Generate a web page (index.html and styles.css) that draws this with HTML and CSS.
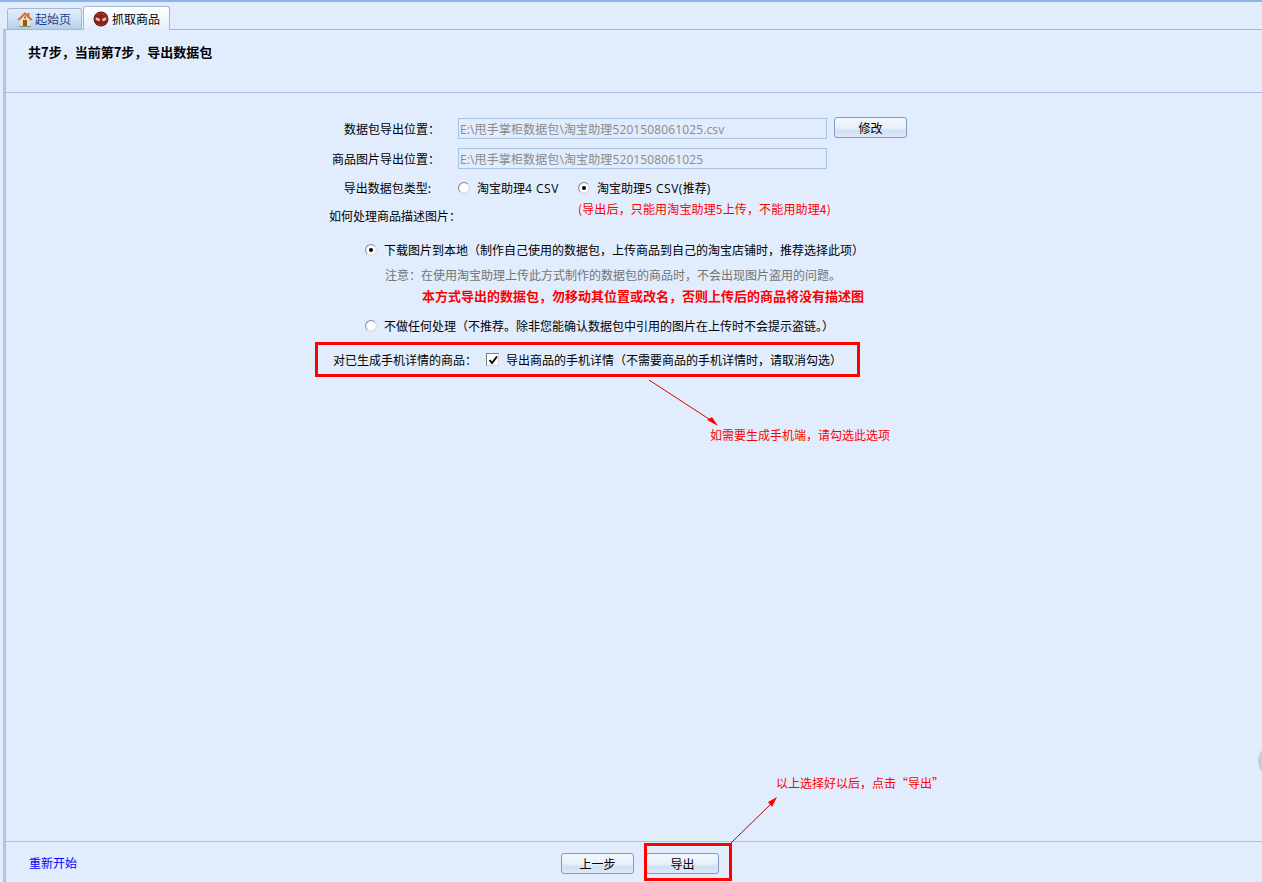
FILE: index.html
```html
<!DOCTYPE html>
<html lang="zh-CN">
<head>
<meta charset="utf-8">
<title>抓取商品</title>
<link rel="stylesheet" href="styles.css">
</head>
<body>
<div class="app">
  <nav class="tabs">
    <div class="tab tab-idle">
      <svg class="tab-icon" viewBox="0 0 16 16" width="16" height="16"><path d="M3 8 L8 3 L13 8 L13 15 L3 15 Z" fill="#f3dcc0"/><path d="M8 1 L0.5 8.5 L2 9.5 L8 4 L14 9.5 L15.5 8.5 L12.5 5.5 L12.5 2 L10.5 2 L10.5 3.5 Z" fill="#d9682c"/><rect x="6" y="9" width="4" height="6" fill="#9a5424"/><rect x="7" y="5.5" width="2" height="2" fill="#5f8f58"/><path d="M2 15.5 L14 15.5" stroke="#7f9a6a" stroke-width="1"/></svg>
      <span>起始页</span>
    </div>
    <div class="tab tab-active">
      <svg class="tab-icon" viewBox="0 0 16 16" width="16" height="16"><circle cx="8" cy="8" r="7.5" fill="#5a2a22"/><circle cx="8" cy="8" r="6.4" fill="#c22a1c"/><path d="M2 5 L14 5 M8 1.5 L8 14.5 M3 12 L13 12 M2 9.5 L6 12 M14 9.5 L10 12" stroke="#45211c" stroke-width="0.9" fill="none"/><path d="M2.8 6.5 L7 8.2 L6 10 L3.5 9.2 Z" fill="#eadfcb"/><path d="M13.2 6.5 L9 8.2 L10 10 L12.5 9.2 Z" fill="#eadfcb"/></svg>
      <span>抓取商品</span>
    </div>
  </nav>
  <div class="panel">
    <header class="head">共7步，当前第7步，导出数据包</header>
    <main class="main">
      <div class="row row-path">
        <label class="label">数据包导出位置：</label>
        <input class="path" type="text" readonly value="E:\甩手掌柜数据包\淘宝助理5201508061025.csv">
        <button class="btn btn-edit" type="button">修改</button>
      </div>
      <div class="row row-path row-second">
        <label class="label">商品图片导出位置：</label>
        <input class="path" type="text" readonly value="E:\甩手掌柜数据包\淘宝助理5201508061025">
      </div>
      <div class="row row-type">
        <label class="label label-type">导出数据包类型:</label>
        <span class="radio"></span><span class="radio-text type-first">淘宝助理<span class="lat">4 CSV</span></span>
        <span class="radio radio-on"></span><span class="radio-text">淘宝助理<span class="lat">5 CSV(</span>推荐<span class="lat">)</span></span>
      </div>
      <div class="row row-how">
        <label class="label label-how">如何处理商品描述图片：</label>
        <span class="red warn">(导出后，只能用淘宝助理5上传，不能用助理4)</span>
      </div>
      <div class="option option-first">
        <span class="radio radio-on"></span><span class="radio-text">下载图片到本地（制作自己使用的数据包，上传商品到自己的淘宝店铺时，推荐选择此项）</span>
      </div>
      <p class="note">注意：在使用淘宝助理上传此方式制作的数据包的商品时，不会出现图片盗用的问题。</p>
      <p class="alert">本方式导出的数据包，勿移动其位置或改名，否则上传后的商品将没有描述图</p>
      <div class="option option-second">
        <span class="radio"></span><span class="radio-text">不做任何处理（不推荐。除非您能确认数据包中引用的图片在上传时不会提示盗链。）</span>
      </div>
      <div class="mobile">
        <span class="mobile-label">对已生成手机详情的商品：</span>
        <span class="check"><svg viewBox="0 0 10 10" width="10" height="10"><path d="M1.5 5 L4 8 L9 1.5" fill="none" stroke="#000" stroke-width="1.9"/></svg></span>
        <span>导出商品的手机详情（不需要商品的手机详情时，请取消勾选）</span>
      </div>
    </main>
    <footer class="foot">
      <a class="restart" href="#">重新开始</a>
      <button class="btn" type="button">上一步</button>
      <button class="btn" type="button">导出</button>
    </footer>
  </div>
  <span class="red tip tip-mobile">如需要生成手机端，请勾选此选项</span>
  <span class="red tip tip-export">以上选择好以后，点击“导出”</span>
  <span class="edge-knob"></span>
  <svg class="marks" viewBox="0 0 1262 882" width="1262" height="882">
    <path d="M649 380 L712 421" stroke="#e00000" stroke-width="1" fill="none"/>
    <path d="M718 426 L707 420 L712 417 Z" fill="#f00"/>
    <path d="M731 843 L773 802" stroke="#b00000" stroke-width="1" fill="none"/>
    <path d="M777 797 L768 802 L772 807 Z" fill="#f00"/>
    <rect x="645.5" y="844.5" width="85" height="35" fill="none" stroke="#f00" stroke-width="3"/>
  </svg>
</div>
</body>
</html>
```
FILE: styles.css
```css
* { box-sizing: border-box; }
html, body { margin: 0; height: 100%; }
body {
  background: #e1edfd;
  color: #000;
  font: 12px/16px "Noto Sans CJK SC", "Liberation Sans", sans-serif;
  overflow: hidden;
}
.app {
  position: relative;
  width: 1262px;
  height: 882px;
  display: flex;
  flex-direction: column;
  border-top: 2px solid #8db2e8;
  overflow: hidden;
}
.tabs {
  display: flex;
  align-items: flex-end;
  height: 27px;
  padding-left: 7px;
  gap: 1px;
  position: relative;
  z-index: 1;
}
.tab {
  display: flex;
  align-items: center;
  border: 1px solid #a3b7d6;
  border-bottom: 0;
  border-radius: 3px 3px 0 0;
}
.tab-idle {
  width: 75px;
  height: 21px;
  padding-left: 9px;
  gap: 2px;
  color: #1b3f8a;
  background: linear-gradient(#e4eefb, #d3e2f5 45%, #b4cdec);
}
.tab-active {
  width: 87px;
  height: 24px;
  margin-bottom: -1px;
  padding-left: 9px;
  gap: 3px;
  background: linear-gradient(#fff, #f2f7fe 50%, #e1edfd);
}
.tab-icon { flex: none; }
.panel {
  flex: 1;
  min-height: 0;
  display: flex;
  flex-direction: column;
  border-top: 1px solid #a3b7d6;
  border-left: 3px solid #b4c5e0;
  margin-left: 3px;
}
.head {
  height: 63px;
  flex: none;
  padding: 14px 0 0 22px;
  font-size: 13px;
  font-weight: 700;
  border-bottom: 1px solid #a9c0e0;
}
.main {
  flex: 1;
  min-height: 0;
  padding: 25px 0 0 310px;
}
.row { display: flex; }
.row-path { height: 21px; align-items: center; }
.row-second { margin-top: 9px; }
.label {
  flex: none;
  width: 124px;
  margin-right: 18px;
  text-align: right;
}
.path {
  width: 369px;
  height: 21px;
  padding: 0 1px;
  border: 1px solid #a9c3e2;
  background: #e1edfd;
  color: #8a8a8a;
  font: 12px "Open Sans", "Noto Sans CJK SC", sans-serif;
  letter-spacing: 0.12px;
  outline: 0;
}
.lat {
  font-family: "Open Sans", "Noto Sans CJK SC", sans-serif;
  letter-spacing: 0.5px;
}
.btn {
  width: 73px;
  height: 21px;
  padding: 0;
  border: 1px solid #7f9cc6;
  border-radius: 3px;
  background: linear-gradient(#f4f8fe, #e7f0fb 50%, #cfe0f3 70%, #dfeafa);
  color: #000;
  font: 12px "Noto Sans CJK SC", sans-serif;
}
.btn-edit { margin: -2px 0 0 7px; }
.row-type { height: 20px; margin-top: 9px; align-items: center; }
.label-type { width: 115px; margin-right: 27px; }
.radio {
  flex: none;
  width: 12px;
  height: 12px;
  border-radius: 50%;
  background: radial-gradient(circle, #fff 55%, #e9e9e9 70%);
  border: 1px solid #8f8f8f;
  border-right-color: #dcdcdc;
  border-bottom-color: #dcdcdc;
  display: flex;
  align-items: center;
  justify-content: center;
}
.radio-on::after {
  content: "";
  width: 4px;
  height: 4px;
  border-radius: 50%;
  background: #000;
}
.radio-text { margin-left: 7px; }
.type-first { width: 101px; }
.row-how { height: 23px; margin-top: 3px; }
.label-how { width: 142px; margin-right: 0; align-self: flex-end; text-align: left; padding-left: 13px; white-space: nowrap; }
.red { color: #f00; }
.warn { margin-left: 120px; letter-spacing: 0.15px; }
.option { display: flex; align-items: center; height: 16px; margin-left: 49px; }
.option-first { margin-top: 18px; }
.option-second { margin-top: 14px; }
.note { margin: 9px 0 0 69px; height: 16px; color: #737373; }
.alert {
  margin: 5px 0 0 106px;
  height: 16px;
  color: #f00;
  font-size: 13px;
  font-weight: 700;
  white-space: nowrap;
}
.mobile {
  display: flex;
  align-items: center;
  width: 545px;
  height: 35px;
  margin: 8px 0 0 -1px;
  padding-left: 15px;
  border: 3px solid #f00;
}
.mobile-label { width: 153px; flex: none; }
.check {
  flex: none;
  width: 13px;
  height: 13px;
  margin-right: 7px;
  border: 1px solid #7e7e7e;
  border-right-color: #d8d8d8;
  border-bottom-color: #d8d8d8;
  background: #fff;
  display: flex;
  align-items: center;
  justify-content: center;
}
.foot {
  flex: none;
  height: 41px;
  display: flex;
  align-items: flex-start;
  padding: 11px 0 0 23px;
  border-top: 1px solid #a9c0e0;
}
.restart {
  width: 532px;
  margin-top: 2px;
  color: #00f;
  text-decoration: none;
}
.foot .btn + .btn { margin-left: 12px; }
.tip { position: absolute; white-space: nowrap; text-spacing-trim: space-all; }
.tip-mobile { left: 710px; top: 425px; }
.tip-export { left: 776px; top: 773px; }
.edge-knob {
  position: absolute;
  left: 1259px;
  top: 748px;
  width: 12px;
  height: 22px;
  border-radius: 50%;
  border: 2px solid #a8adb5;
  filter: blur(1px);
}
.marks { position: absolute; left: 0; top: -2px; pointer-events: none; }
```
